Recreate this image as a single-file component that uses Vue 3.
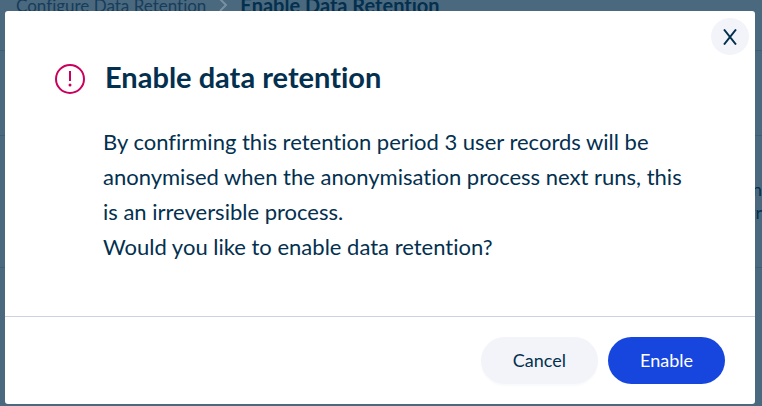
<script setup>
import { ref } from 'vue'

const open = ref(true)
const close = () => { open.value = false }
</script>

<template>
  <div class="page">
    <nav class="breadcrumb" aria-label="Breadcrumb">
      <a href="#configure">Configure Data Retention</a>
      <svg class="chevron" viewBox="0 0 10 16" aria-hidden="true"><path d="M2 2l6 6-6 6" /></svg>
      <span class="current">Enable Data Retention</span>
    </nav>
    <div class="row spacer"></div>
    <div class="row detail"><span>n</span><span>gr</span></div>
    <div class="row"></div>

    <div v-if="open" class="backdrop">
      <section class="modal" role="alertdialog" aria-modal="true" aria-labelledby="title" aria-describedby="message">
        <button class="close" type="button" aria-label="Close" @click="close">
          <svg viewBox="0 0 16 16" aria-hidden="true"><path d="M2 0.5L14 15.5M14 0.5L2 15.5" /></svg>
        </button>
        <header class="header">
          <svg class="alert" viewBox="0 0 30 30" aria-hidden="true">
            <circle cx="15" cy="15" r="14" />
            <path d="M15 7v10" />
            <circle class="dot" cx="15" cy="21" r="1.5" />
          </svg>
          <h1 id="title">Enable data retention</h1>
        </header>
        <div id="message" class="message">
          <p>By confirming this retention period 3 user records will be anonymised when the anonymisation process next runs, this is an irreversible process.</p>
          <p>Would you like to enable data retention?</p>
        </div>
        <footer class="footer">
          <button class="btn" type="button" @click="close">Cancel</button>
          <button class="btn primary" type="button" @click="close">Enable</button>
        </footer>
      </section>
    </div>
  </div>
</template>

<style>
body { background: #4a687e; }
</style>

<style scoped>
* { box-sizing: border-box; }
.page {
  min-height: 100vh;
  overflow: hidden;
  background: #4a687e;
  color: #03304f;
  font-family: Lato, "Open Sans", sans-serif;
  font-variant-ligatures: none;
}
.breadcrumb {
  display: flex;
  align-items: center;
  gap: 12px;
  height: 50px;
  margin-top: -20px;
  padding-left: 16px;
  font-size: 17px;
  white-space: nowrap;
}
.breadcrumb a { color: #163d5b; text-decoration: none; }
.current { font-size: 20px; font-weight: 700; }
.chevron { width: 10px; height: 16px; fill: none; stroke: #7890a2; stroke-width: 2; }
.row { height: 132px; border-top: 1px solid #3f5e75; }
.spacer { height: 85px; margin-top: 20px; }
.detail {
  display: flex;
  flex-direction: column;
  align-items: flex-end;
  padding-top: 42px;
  font-size: 18px;
  line-height: 23px;
}
.backdrop {
  position: fixed;
  inset: 0;
  padding: 11px 7px 2px 5px;
}
.modal {
  position: relative;
  background: #fff;
  border-radius: 3px;
}
.close {
  position: absolute;
  top: 7px;
  right: 6px;
  display: grid;
  place-items: center;
  width: 38px;
  height: 37px;
  padding: 0;
  border: 0;
  border-radius: 50%;
  background: #f3f4f9;
  cursor: pointer;
}
.close svg { width: 16px; height: 16px; fill: none; stroke: #03304f; stroke-width: 2; }
.header {
  display: flex;
  align-items: flex-end;
  gap: 20px;
  padding: 46px 50px 0;
}
.alert { flex: none; width: 30px; height: 30px; margin-bottom: 3px; fill: none; stroke: #c9005d; stroke-width: 2; }
.alert .dot { fill: #c9005d; stroke: none; }
h1 { margin: 0; font-size: 29px; line-height: 40px; font-weight: 700; }
.message {
  padding: 27px 64px 52px 98px;
  font-size: 22px;
  line-height: 35px;
}
.message p { margin: 0; }
.footer {
  display: flex;
  justify-content: flex-end;
  gap: 10px;
  padding: 20px 30px;
  border-top: 1px solid #cbd2e1;
}
.btn {
  height: 47px;
  padding: 0 32px 2px;
  border: 0;
  border-radius: 24px;
  background: #f3f4f9;
  box-shadow: 0 2px 2px #f9fafb;
  color: #03304f;
  font-family: inherit;
  font-size: 18px;
  cursor: pointer;
}
.btn.primary { background: #1746de; box-shadow: none; color: #fff; }
</style>
